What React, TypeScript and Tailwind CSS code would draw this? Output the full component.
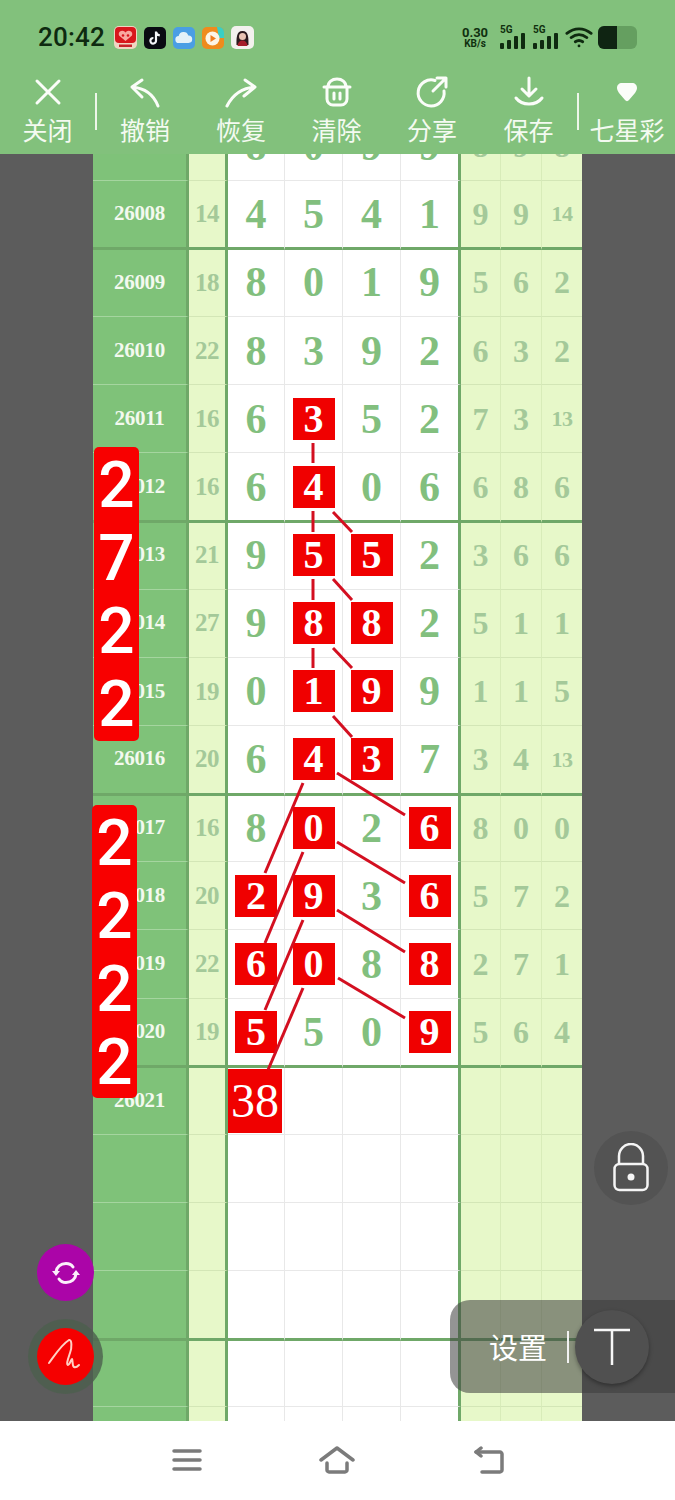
import { ReactNode } from 'react';

const serif = "font-['Liberation_Serif',serif]";
const cjk = "font-['Noto_Sans_CJK_SC','Noto_Sans',sans-serif]";

type Row = {
  id: string;
  sum: string;
  digits: string[];
  red?: number[];
  tail: string[];
};

const rows: Row[] = [
  { id: '', sum: '', digits: ['8', '0', '9', '9'], tail: ['8', '9', '8'] },
  { id: '26008', sum: '14', digits: ['4', '5', '4', '1'], tail: ['9', '9', '14'] },
  { id: '26009', sum: '18', digits: ['8', '0', '1', '9'], tail: ['5', '6', '2'] },
  { id: '26010', sum: '22', digits: ['8', '3', '9', '2'], tail: ['6', '3', '2'] },
  { id: '26011', sum: '16', digits: ['6', '3', '5', '2'], red: [1], tail: ['7', '3', '13'] },
  { id: '26012', sum: '16', digits: ['6', '4', '0', '6'], red: [1], tail: ['6', '8', '6'] },
  { id: '26013', sum: '21', digits: ['9', '5', '5', '2'], red: [1, 2], tail: ['3', '6', '6'] },
  { id: '26014', sum: '27', digits: ['9', '8', '8', '2'], red: [1, 2], tail: ['5', '1', '1'] },
  { id: '26015', sum: '19', digits: ['0', '1', '9', '9'], red: [1, 2], tail: ['1', '1', '5'] },
  { id: '26016', sum: '20', digits: ['6', '4', '3', '7'], red: [1, 2], tail: ['3', '4', '13'] },
  { id: '26017', sum: '16', digits: ['8', '0', '2', '6'], red: [1, 3], tail: ['8', '0', '0'] },
  { id: '26018', sum: '20', digits: ['2', '9', '3', '6'], red: [0, 1, 3], tail: ['5', '7', '2'] },
  { id: '26019', sum: '22', digits: ['6', '0', '8', '8'], red: [0, 1, 3], tail: ['2', '7', '1'] },
  { id: '26020', sum: '19', digits: ['5', '5', '0', '9'], red: [0, 3], tail: ['5', '6', '4'] },
];

const links = [
  [313, 443, 313, 463], [313, 511, 313, 532], [313, 579, 313, 600], [313, 648, 313, 668],
  [333, 512, 352, 532], [333, 579, 352, 600], [333, 648, 352, 668], [333, 716, 352, 737],
  [337, 773, 405, 815], [337, 842, 405, 883], [337, 910, 405, 952], [338, 978, 405, 1018],
  [303, 783, 265, 873], [303, 852, 265, 943], [303, 920, 265, 1010], [303, 988, 268, 1070],
];

const ToolItem = ({ label, icon, width }: { label: string; icon: ReactNode; width: string }) => (
  <div className={`flex flex-col items-center ${width}`}>
    <div className="flex h-[40px] items-center justify-center">{icon}</div>
    <span className={`${cjk} -mt-[1px] text-[25px] leading-[36px] text-[#f4faf1]`}>{label}</span>
  </div>
);

const ToolIcon = ({ children }: { children: ReactNode }) => (
  <svg width="36" height="36" viewBox="0 0 36 36" fill="none" stroke="#fbfdf9" strokeWidth="3" strokeLinecap="round" strokeLinejoin="round">
    {children}
  </svg>
);

const Signal = () => (
  <div className="relative h-[24px] w-[26px]">
    <span className="absolute left-0 top-[-2px] font-['Roboto',sans-serif] text-[10px] font-bold leading-[12px] text-[#10300f]">5G</span>
    <svg className="absolute left-0 top-0" width="26" height="24" viewBox="0 0 26 24" fill="#0f2a10">
      <rect x="0" y="17" width="4" height="6" rx="1" />
      <rect x="7" y="14" width="4" height="9" rx="1" />
      <rect x="14" y="10" width="4" height="13" rx="1" />
      <rect x="21" y="7" width="4" height="16" rx="1" />
    </svg>
  </div>
);

const StatusBar = () => (
  <div className="flex h-[72px] items-center pl-[38px] pr-[38px] pt-[3px]">
    <span className="font-['Roboto',sans-serif] text-[26px] font-medium tracking-[0.2px] text-[#0e2a10]">20:42</span>
    <div className="ml-[9px] flex items-center gap-[7px]">
      <svg width="23" height="23" viewBox="0 0 23 23">
        <rect width="23" height="23" rx="5" fill="#f0d5c2" />
        <rect x="1" y="1" width="21" height="16" rx="4" fill="#d8161c" />
        <path d="M11.5 15 5 9.5a3.6 3.6 0 0 1 6.5-3 3.6 3.6 0 0 1 6.5 3Z" fill="#f9a8a0" />
        <circle cx="9" cy="9.5" r="1.3" fill="#d8161c" />
        <circle cx="14" cy="9.5" r="1.3" fill="#d8161c" />
        <rect x="5" y="18.5" width="13" height="2.5" fill="#c8222a" />
      </svg>
      <svg width="22" height="22" viewBox="0 0 22 22">
        <rect width="22" height="22" rx="5" fill="#090b12" />
        <path d="M12 4.500v9.300a2.800 2.800 0 1 1-2.600-2.800M12 4.800c.4 2.200 1.800 3.400 3.800 3.600" fill="none" stroke="#f4f6fa" strokeWidth="2.200" />
      </svg>
      <svg width="22" height="22" viewBox="0 0 22 22">
        <rect width="22" height="22" rx="5" fill="#4a9ee4" />
        <path d="M6 16a3.500 3.500 0 0 1-.3-7 5 5 0 0 1 9.600-.6A3.800 3.800 0 0 1 15.500 16Z" fill="#e4f1f8" />
      </svg>
      <svg width="22" height="22" viewBox="0 0 22 22">
        <rect width="22" height="22" rx="5" fill="#ef8b1d" />
        <path d="M15 0h2a5 5 0 0 1 5 5v6h-5Z" fill="#39cfc4" />
        <circle cx="10.500" cy="11.500" r="7" fill="#fdf4e6" />
        <path d="M8.500 8v7l5.500-3.500Z" fill="#ef7c1d" />
      </svg>
      <svg width="23" height="23" viewBox="0 0 23 23">
        <rect width="23" height="23" rx="5" fill="#f3f1ee" />
        <path d="M5.500 19c0-6-.5-14 6-14s6 8 6 14Z" fill="#2b1a1e" />
        <circle cx="11.500" cy="10.500" r="3.500" fill="#e9c4b4" />
        <path d="M6.500 20c.5-4 2.500-5.500 5-5.500s4.500 1.500 5 5.500Z" fill="#a51d2a" />
      </svg>
    </div>
    <div className="ml-auto flex items-center">
      <div className="mr-[10px] flex w-[30px] flex-col items-center font-['Roboto',sans-serif] font-bold text-[#10300f]">
        <span className="text-[13px] leading-[13px]">0.30</span>
        <span className="text-[10px] leading-[10px]">KB/s</span>
      </div>
      <Signal />
      <div className="w-[7px]" />
      <Signal />
      <svg className="ml-[6px]" width="28" height="24" viewBox="0 0 30 24" fill="none" stroke="#0f2a10" strokeWidth="3" strokeLinecap="round">
        <path d="M2 7c8-6.500 18-6.500 26 0" />
        <path d="M6.500 11.500c5.500-4 11.500-4 17 0" />
        <path d="M11 16c2.500-1.700 5.500-1.700 8 0" />
        <circle cx="15" cy="20.500" r="1.500" fill="#0f2a10" stroke="none" />
      </svg>
      <div className="ml-[5px] flex h-[23px] w-[39px] overflow-hidden rounded-[6px] bg-[#659f60]">
        <div className="h-full w-[19px] bg-[#0f2412]" />
      </div>
    </div>
  </div>
);

const ToolBar = () => (
  <div className="flex h-[82px] items-start">
    <ToolItem
      label="关闭"
      width="w-[95px]"
      icon={
        <ToolIcon>
          <path d="M7 7l22 22M29 7 7 29" />
        </ToolIcon>
      }
    />
    <div className="mt-[21px] h-[37px] w-[2px] bg-[#eef6ea]" />
    <ToolItem
      label="撤销"
      width="w-[96px]"
      icon={
        <ToolIcon>
          <path d="M15 6 5 13l10 10M5 13c12 1 21 6 26 19" />
        </ToolIcon>
      }
    />
    <ToolItem
      label="恢复"
      width="w-[96px]"
      icon={
        <ToolIcon>
          <path d="M22 6l10 7-11 9M32 13C20 14 10 20 4 32" />
        </ToolIcon>
      }
    />
    <ToolItem
      label="清除"
      width="w-[95px]"
      icon={
        <ToolIcon>
          <path d="M8 13v12a6 6 0 0 0 6 6h8a6 6 0 0 0 6-6V13" />
          <path d="M5 13h26M9 13c0-5 4-8 9-8s9 3 9 8" />
          <path d="M15 19v6M21 19v6" />
        </ToolIcon>
      }
    />
    <ToolItem
      label="分享"
      width="w-[96px]"
      icon={
        <ToolIcon>
          <path d="M21 6.500A13 13 0 1 0 30 17M19 17 32 4M23 4h9v9" />
        </ToolIcon>
      }
    />
    <ToolItem
      label="保存"
      width="w-[97px]"
      icon={
        <ToolIcon>
          <path d="M18 4v17M11 15l7 7 7-7M5 24c3 4 7 6 13 6s10-2 13-6" />
        </ToolIcon>
      }
    />
    <div className="mt-[21px] h-[37px] w-[2px] bg-[#eef6ea]" />
    <ToolItem
      label="七星彩"
      width="w-[96px]"
      icon={
        <svg width="22" height="20" viewBox="0 0 22 20" fill="#fbfdf9">
          <path d="M1 6c0-3 2-5 5-5h10c3 0 5 2 5 5 0 2-1 3-2 5l-6 7c-1 1.500-3 1.500-4 0l-6-7C2 9 1 8 1 6Z" />
        </svg>
      }
    />
  </div>
);

const Digit = ({ value, red, line }: { value: string; red?: boolean; line: string }) => (
  <div className={`flex items-center justify-center ${line}`}>
    {red ? (
      <div className="flex h-[42px] w-[42px] items-center justify-center bg-[#f00000] text-[40px] font-bold leading-none text-white">
        {value}
      </div>
    ) : (
      <span className="text-[42px] font-bold leading-none text-[#82bf7e]">{value}</span>
    )}
  </div>
);

const TableRow = ({ row, index }: { row?: Row; index: number }) => {
  // every 4th row closes a group with a thick line, centred on the row boundary
  const thick = (index + 3) % 4 === 0;
  const size = thick ? 'relative z-10 -mb-[1.5px] h-[69.67px]' : 'h-[68.17px]';
  const under = thick ? 'border-b-[3px] border-b-[#6fa868]' : 'border-b border-b-[#e8e8e8]';
  const sideUnder = thick ? 'border-b-[3px] border-b-[#6fa868]' : 'border-b border-b-[#d3e6b6]';
  const tail = row ? row.tail : ['', '', ''];

  return (
    <div className={`grid grid-cols-[96px_39px_57px_58px_58px_60px_40px_41px_40px] ${size} ${serif}`}>
      <div className={`flex items-center justify-center border-r-[3px] border-r-[#6fa868] bg-[#7fc279] text-[21px] font-bold tracking-[-0.3px] text-[#f3f9ef] ${thick ? under : 'border-b border-b-[#a5d59f]'}`}>
        {row?.id}
      </div>
      <div className={`flex items-center justify-center border-r-[3px] border-r-[#6fa868] bg-[#e7f8c9] text-[25px] font-bold tracking-[-0.5px] text-[#a4c999] ${sideUnder}`}>
        {row?.sum}
      </div>
      {[0, 1, 2, 3].map((c) => {
        const edge = c === 3 ? 'border-r-[3px] border-r-[#6fa868]' : 'border-r border-r-[#e8e8e8]';
        if (!row) return <div key={c} className={`${edge} ${under} bg-white`} />;
        return <Digit key={c} value={row.digits[c]} red={row.red?.includes(c)} line={`${edge} ${under} bg-white`} />;
      })}
      {tail.map((v, c) => (
        <div
          key={c}
          className={`flex items-center justify-center bg-[#e7f8c9] font-bold text-[#a4c999] ${v.length > 1 ? 'text-[22px] tracking-[-0.5px]' : 'text-[32px]'} ${c < 2 ? 'border-r border-r-[#d8ecb9]' : ''} ${sideUnder}`}
        >
          {v}
        </div>
      ))}
    </div>
  );
};

const SidePill = ({ digits, className }: { digits: string[]; className: string }) => (
  <div className={`absolute z-20 flex w-[45px] flex-col items-center rounded-[5px] bg-[#f80000] pt-[2px] font-['Roboto','Noto_Sans',sans-serif] text-[64px] font-medium leading-[73px] text-white ${className}`}>
    {digits.map((d, i) => (
      <span key={i}>{d}</span>
    ))}
  </div>
);

const Links = () => (
  <svg className="absolute left-0 top-0 z-20" width="675" height="1500" fill="none" stroke="#d30f20" strokeWidth="3">
    {links.map(([x1, y1, x2, y2], i) => (
      <line key={i} x1={x1} y1={y1} x2={x2} y2={y2} />
    ))}
  </svg>
);

const Floating = () => (
  <>
    <div className="absolute left-[37px] top-[1244px] z-20 flex h-[57px] w-[57px] items-center justify-center rounded-full bg-[#ab05a8]">
      <svg width="32" height="32" viewBox="0 0 32 32" fill="none" stroke="#fbeffb" strokeWidth="3" strokeLinecap="round">
        <path d="M6 15c.5-5 4.500-8.500 10-8.500 3 0 5.500 1.200 7 3.500" />
        <path d="M26 17c-.5 5-4.500 8.500-10 8.500-3 0-5.500-1.200-7-3.500" />
        <path d="M2 14h8l-4 5ZM30 18h-8l4-5Z" fill="#fbeffb" stroke="none" />
      </svg>
    </div>
    <div className="absolute left-[28px] top-[1319px] z-20 flex h-[75px] w-[75px] items-center justify-center rounded-full bg-[#4c5f4e]/80">
      <div className="flex h-[57px] w-[57px] items-center justify-center rounded-full bg-[#f50000]">
        <svg width="40" height="40" viewBox="0 0 40 40" fill="none" stroke="#ffd0c4" strokeWidth="2" strokeLinecap="round" strokeLinejoin="round">
          <path d="M3 26C9 18 15 8 23 3c3-1 3 8 1 13-2 6-4 11-2 12 2 0 3-6 4-6 1 1 0 7 2 8 2 1 4-1 5-2" />
        </svg>
      </div>
    </div>
    <div className="absolute left-[594px] top-[1131px] z-20 flex h-[74px] w-[74px] items-center justify-center rounded-full bg-[#535353]">
      <svg width="38" height="50" viewBox="0 0 38 50" fill="none" stroke="#f5f5f5" strokeWidth="2.500">
        <path d="M7 21v-8a12 12 0 0 1 24 0v8" />
        <rect x="2.500" y="21" width="33" height="26" rx="5" />
        <circle cx="19" cy="34" r="3.500" fill="#f5f5f5" stroke="none" />
      </svg>
    </div>
    <div className="absolute left-[450px] top-[1300px] z-20 flex h-[93px] w-[225px] items-center rounded-l-[20px] bg-[#3c3c3c]/55 pl-[39px]">
      <span className={`${cjk} text-[29px] leading-none text-white`}>设置</span>
      <div className="ml-[20px] h-[32px] w-[2px] bg-[#f2f2f2]" />
      <div className="ml-[6px] flex h-[74px] w-[74px] items-center justify-center rounded-full bg-[#505050] shadow-[0_2px_4px_rgba(0,0,0,0.35)]">
        <svg width="38" height="38" viewBox="0 0 38 38" fill="none" stroke="#f7f7f7" strokeWidth="2.500">
          <path d="M1 2h36M19 2v35" />
        </svg>
      </div>
    </div>
  </>
);

const NavBar = () => (
  <div className="flex h-[79px] items-center justify-center gap-[118px] bg-white pb-[2px]">
    <svg className="translate-x-[1px]" width="30" height="24" viewBox="0 0 30 24" fill="none" stroke="#7b7b7b" strokeWidth="3.500" strokeLinecap="round">
      <path d="M2 3h26M2 12h26M2 21h26" />
    </svg>
    <svg width="36" height="28" viewBox="0 0 36 28" fill="none" stroke="#7b7b7b" strokeWidth="3.500" strokeLinecap="round" strokeLinejoin="round">
      <path d="M2 14 18 2l16 12" />
      <path d="M8 17v7c0 1 1 2 2 2h16c1 0 2-1 2-2v-7" />
    </svg>
    <svg width="32" height="28" viewBox="0 0 32 28" fill="none" stroke="#7b7b7b" strokeWidth="3.500" strokeLinecap="round" strokeLinejoin="round">
      <path d="M3 6h24c1 0 2 1 2 2v16c0 1-1 2-2 2H9" />
      <path d="M8 2 3 6l5 4" />
    </svg>
  </div>
);

export default function App() {
  const blank = [14, 15, 16, 17, 18, 19];

  return (
    <div className="relative flex h-[1500px] w-[675px] flex-col overflow-hidden bg-[#5c5c5c]">
      <header className="relative z-10 bg-[#82c17c]">
        <StatusBar />
        <ToolBar />
      </header>

      <main className="h-[1267px] overflow-hidden">
        <div className="mx-auto -mt-[41.5px] w-[489px]">
          {rows.map((row, i) => (
            <TableRow key={i} row={row} index={i} />
          ))}
          <div className="relative">
            <TableRow row={{ id: '26021', sum: '', digits: ['', '', '', ''], tail: ['', '', ''] }} index={14} />
            <div className={`absolute left-[135px] top-[2px] z-10 flex h-[64px] w-[54px] items-center justify-center bg-[#f00000] text-[48px] leading-none text-white ${serif}`}>
              38
            </div>
          </div>
          {blank.map((n) => (
            <TableRow key={n} index={n + 1} />
          ))}
        </div>
      </main>

      <NavBar />

      <Links />
      <SidePill digits={['2', '7', '2', '2']} className="left-[94px] top-[447px] h-[294px]" />
      <SidePill digits={['2', '2', '2', '2']} className="left-[92px] top-[805px] h-[293px]" />
      <Floating />
    </div>
  );
}
